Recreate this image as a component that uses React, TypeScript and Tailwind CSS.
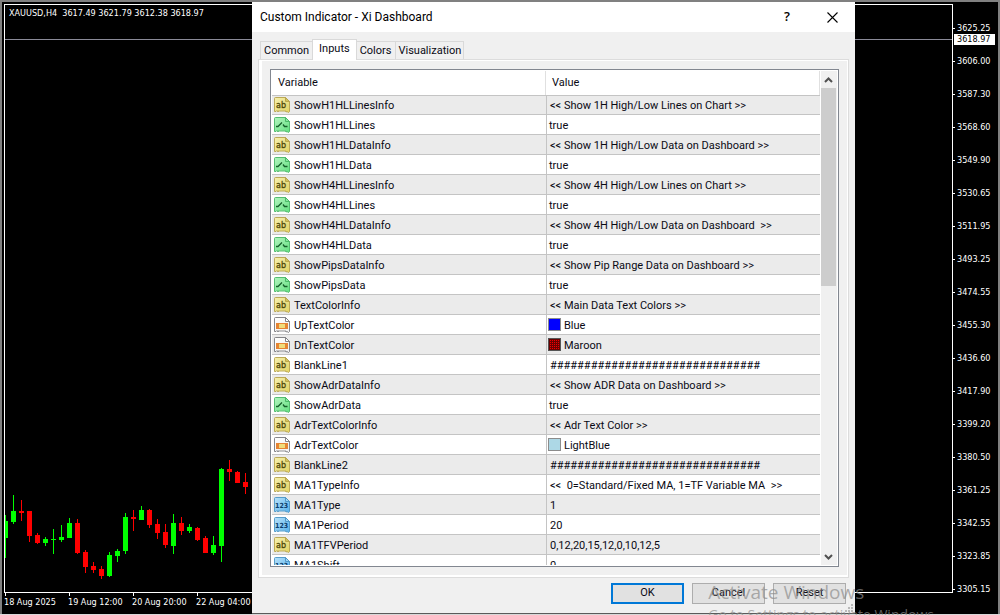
import { useState } from "react";
import { clsx } from "clsx";

type Kind = "string" | "bool" | "color" | "int";

interface Param {
  name: string;
  kind: Kind;
  value: string;
  swatch?: "blue" | "maroon" | "lightblue";
}

interface Candle {
  up: boolean;
  // high, body top, body bottom, low
  y: [number, number, number, number];
}

const TABS = ["Common", "Inputs", "Colors", "Visualization"];

const PARAMS: Param[] = [
  { name: "ShowH1HLLinesInfo", kind: "string", value: "<< Show 1H High/Low Lines on Chart >>" },
  { name: "ShowH1HLLines", kind: "bool", value: "true" },
  { name: "ShowH1HLDataInfo", kind: "string", value: "<< Show 1H High/Low Data on Dashboard >>" },
  { name: "ShowH1HLData", kind: "bool", value: "true" },
  { name: "ShowH4HLLinesInfo", kind: "string", value: "<< Show 4H High/Low Lines on Chart >>" },
  { name: "ShowH4HLLines", kind: "bool", value: "true" },
  { name: "ShowH4HLDataInfo", kind: "string", value: "<< Show 4H High/Low Data on Dashboard  >>" },
  { name: "ShowH4HLData", kind: "bool", value: "true" },
  { name: "ShowPipsDataInfo", kind: "string", value: "<< Show Pip Range Data on Dashboard >>" },
  { name: "ShowPipsData", kind: "bool", value: "true" },
  { name: "TextColorInfo", kind: "string", value: "<< Main Data Text Colors >>" },
  { name: "UpTextColor", kind: "color", value: "Blue", swatch: "blue" },
  { name: "DnTextColor", kind: "color", value: "Maroon", swatch: "maroon" },
  { name: "BlankLine1", kind: "string", value: "###############################" },
  { name: "ShowAdrDataInfo", kind: "string", value: "<< Show ADR Data on Dashboard >>" },
  { name: "ShowAdrData", kind: "bool", value: "true" },
  { name: "AdrTextColorInfo", kind: "string", value: "<< Adr Text Color >>" },
  { name: "AdrTextColor", kind: "color", value: "LightBlue", swatch: "lightblue" },
  { name: "BlankLine2", kind: "string", value: "###############################" },
  { name: "MA1TypeInfo", kind: "string", value: "<<  0=Standard/Fixed MA, 1=TF Variable MA  >>" },
  { name: "MA1Type", kind: "int", value: "1" },
  { name: "MA1Period", kind: "int", value: "20" },
  { name: "MA1TFVPeriod", kind: "string", value: "0,12,20,15,12,0,10,12,5" },
  { name: "MA1Shift", kind: "int", value: "0" },
];

const PRICES = [
  "3625.25", "3606.00", "3587.30", "3568.60", "3549.90", "3530.65",
  "3511.95", "3493.25", "3474.55", "3455.30", "3436.60", "3417.90",
  "3399.20", "3380.50", "3361.25", "3342.55", "3323.85", "3305.15",
];

const TIMES = ["18 Aug 2025", "19 Aug 12:00", "20 Aug 20:00", "22 Aug 04:00"];

const CANDLES: Candle[] = [
  { up: true, y: [515, 521, 538, 558] },
  { up: true, y: [495, 511, 522, 524] },
  { up: false, y: [500, 511, 513, 521] },
  { up: false, y: [511, 511, 536, 542] },
  { up: false, y: [533, 535, 543, 544] },
  { up: true, y: [537, 539, 543, 546] },
  { up: true, y: [529, 539, 540, 554] },
  { up: true, y: [525, 537, 540, 542] },
  { up: true, y: [518, 523, 538, 538] },
  { up: false, y: [519, 523, 553, 554] },
  { up: false, y: [550, 552, 567, 573] },
  { up: false, y: [562, 566, 570, 573] },
  { up: false, y: [566, 569, 576, 579] },
  { up: true, y: [552, 555, 576, 577] },
  { up: true, y: [549, 551, 556, 562] },
  { up: true, y: [513, 517, 551, 554] },
  { up: false, y: [510, 517, 519, 531] },
  { up: true, y: [506, 510, 520, 520] },
  { up: false, y: [509, 510, 525, 528] },
  { up: false, y: [519, 524, 533, 539] },
  { up: false, y: [524, 532, 545, 548] },
  { up: true, y: [514, 523, 546, 554] },
  { up: false, y: [517, 523, 531, 535] },
  { up: true, y: [524, 527, 531, 533] },
  { up: false, y: [527, 528, 540, 541] },
  { up: false, y: [536, 538, 553, 553] },
  { up: true, y: [536, 545, 553, 555] },
  { up: true, y: [468, 469, 546, 562] },
  { up: false, y: [460, 469, 472, 481] },
  { up: false, y: [471, 472, 483, 483] },
  { up: false, y: [473, 482, 487, 494] },
];

// ---------------------------------------------------------------------------
// Icons
// ---------------------------------------------------------------------------

const ICON_COLORS: Record<Kind, { from: string; to: string; edge: string; fold: string }> = {
  string: { from: "#f6f0b0", to: "#e2d462", edge: "#b5a24a", fold: "#d3c35c" },
  bool: { from: "#b4f5c0", to: "#62e080", edge: "#46b463", fold: "#8ae8a0" },
  color: { from: "#ffffff", to: "#f0f0f0", edge: "#77777c", fold: "#ffffff" },
  int: { from: "#b8e2fa", to: "#56b0ea", edge: "#4a94c4", fold: "#9fd6f6" },
};

function ParamIcon({ kind }: { kind: Kind }) {
  const c = ICON_COLORS[kind];
  const id = `fill-${kind}`;
  return (
    <svg className="h-4 w-4 shrink-0" viewBox="0 0 16 16" aria-hidden="true">
      <defs>
        <linearGradient id={id} x1="0" y1="0" x2="1" y2="1">
          <stop offset="0" stopColor={c.from} />
          <stop offset="1" stopColor={c.to} />
        </linearGradient>
      </defs>
      <path
        d="M.5 1.5Q.5.5 1.5.5H11.5L15.5 4.5V14.5L14.5 15.5L13 14.5L12 15L11 13.5L10 14.5L9 13.5L8 14.5L7 13.5L6 14.5L5 13.5L4 15L3 13.5L2 14.5L.5 14.500Z"
        fill={`url(#${id})`}
        stroke={c.edge}
        strokeWidth=".9"
      />
      <path d="M11.5.5V4.5H15.5Z" fill={c.fold} stroke={c.edge} strokeWidth=".9" />
      {kind === "string" && (
        <text x="2" y="11" className="font-['DejaVu_Sans'] text-[8px]" fill="#4e4708" stroke="#4e4708" strokeWidth=".3">
          ab
        </text>
      )}
      {kind === "int" && (
        <text x="1" y="11" className="font-['DejaVu_Sans_Condensed'] text-[7px] font-bold" fill="#0c3c6a">
          123
        </text>
      )}
      {kind === "bool" && (
        <path d="M2 9.500H4L8 5.500M9 7.500L10.500 9.500H13.500" fill="none" stroke="#17602b" strokeWidth="1.300" />
      )}
      {kind === "color" && (
        <>
          <rect x="2" y="6" width="12" height="6" fill="#e58433" />
          <rect x="5" y="7" width="6" height="4" fill="#f0dc7a" />
        </>
      )}
    </svg>
  );
}

function Swatch({ color }: { color: NonNullable<Param["swatch"]> }) {
  return (
    <svg className="size-[13px] shrink-0" viewBox="0 0 13 13" aria-hidden="true">
      <defs>
        <pattern id="maroon-dither" width="2" height="2" patternUnits="userSpaceOnUse">
          <rect width="2" height="2" fill="#6a0000" />
          <rect width="1" height="1" fill="#f00000" />
        </pattern>
      </defs>
      <rect
        x=".5"
        y=".5"
        width="12"
        height="12"
        stroke={color === "maroon" ? "#555" : "#8c8c8c"}
        fill={color === "blue" ? "#0000ff" : color === "maroon" ? "url(#maroon-dither)" : "#add8e6"}
      />
    </svg>
  );
}

// ---------------------------------------------------------------------------
// Chart
// ---------------------------------------------------------------------------

function Chart() {
  return (
    <div className="flex min-h-0 flex-1 border-t-2 border-r-2 border-l-2 border-[#808080] bg-black pt-0.5 pl-0.5 font-['DejaVu_Sans_Condensed',sans-serif] text-[9px] text-white">
      <div className="flex min-w-0 flex-1 flex-col">
        <div className="flex min-h-0 flex-1 flex-col border border-white">
          <div className="h-[35px] shrink-0 border-b border-[#8a8a98] pl-1 leading-[16px] whitespace-pre">
            {"XAUUSD,H4  3617.49 3621.79 3612.38 3618.97"}
          </div>
          <svg className="mt-auto h-[140px] w-[250px] shrink-0" viewBox="5 452 250 140" shapeRendering="crispEdges">
            {CANDLES.map(({ up, y }, i) => {
              const x = 5 + i * 8;
              return (
                <g key={x} fill={up ? "#00ff00" : "#ff0000"}>
                  <rect x={x} y={y[0]} width="1" height={y[3] - y[0]} />
                  <rect x={x - 2} y={y[1]} width="5" height={y[2] - y[1]} />
                </g>
              );
            })}
          </svg>
        </div>
        <div className="flex h-[21px] shrink-0">
          {TIMES.map((time) => (
            <div key={time} className="w-16 whitespace-nowrap">
              <div className="ml-px h-[3px] w-px bg-white" />
              <div className="leading-[12px]">{time}</div>
            </div>
          ))}
        </div>
      </div>

      <div className="relative w-[45px] shrink-0 pt-2">
        {PRICES.map((price) => (
          <div key={price} className="flex h-[33px] items-center gap-0.5">
            <span className="h-px w-0.5 bg-white" />
            {price}
          </div>
        ))}
        <div className="absolute top-[30px] left-px w-[41px] bg-white pl-[3px] leading-[11px] text-black">3618.97</div>
      </div>
    </div>
  );
}

// ---------------------------------------------------------------------------
// Dialog
// ---------------------------------------------------------------------------

function Scrollbar() {
  return (
    <div className="ml-px flex w-4 shrink-0 flex-col bg-[#f0f0f0]">
      <button type="button" aria-label="Scroll up" className="flex h-[17px] w-[15px] items-center justify-center">
        <svg className="h-[6px] w-[9px]" viewBox="0 0 9 6" fill="none" stroke="#505050" strokeWidth="2">
          <path d="M1 5L4.500 1.500L8 5" />
        </svg>
      </button>
      <div className="min-h-0 flex-1">
        <div className="h-[43%] w-[15px] bg-[#cdcdcd]" />
      </div>
      <button type="button" aria-label="Scroll down" className="flex h-[17px] w-[15px] items-center justify-center">
        <svg className="h-[6px] w-[9px]" viewBox="0 0 9 6" fill="none" stroke="#505050" strokeWidth="2">
          <path d="M1 1L4.500 4.500L8 1" />
        </svg>
      </button>
    </div>
  );
}

function ParamTable() {
  return (
    <div className="flex min-h-0 flex-1 overflow-hidden border border-[#828790] bg-white p-px">
      <div className="min-w-0 flex-1 overflow-hidden">
        <table className="w-full table-fixed border-separate border-spacing-0 text-left leading-4">
          <thead>
            <tr>
              <th className="h-6 border-r border-[#e0e0e0] p-0 pl-1.5 font-normal">Variable</th>
              <th className="h-6 border-r border-[#e0e0e0] p-0 pl-1.5 font-normal">Value</th>
            </tr>
          </thead>
          <tbody className="[&>tr:first-child>td]:border-t">
            {PARAMS.map((param, i) => (
              <tr key={param.name} className={i % 2 === 0 ? "bg-[#ebebeb]" : "bg-white"}>
                <td className="h-5 border-b border-[#c4c4c4] p-0 pl-0.5">
                  <div className="flex items-center gap-1">
                    <ParamIcon kind={param.kind} />
                    <span className="pt-0.5">{param.name}</span>
                  </div>
                </td>
                <td
                  className={clsx(
                    "h-5 border-b border-l border-[#c4c4c4] p-0 whitespace-pre",
                    param.swatch ? "pl-px" : param.kind === "bool" ? "pl-0.5" : "pl-[3px]"
                  )}
                >
                  <div className="flex items-center gap-[3px]">
                    {param.swatch && <Swatch color={param.swatch} />}
                    <span className="pt-0.5">{param.value}</span>
                  </div>
                </td>
              </tr>
            ))}
          </tbody>
        </table>
      </div>
      <Scrollbar />
    </div>
  );
}

function Dialog() {
  const [tab, setTab] = useState("Inputs");

  return (
    <div
      role="dialog"
      aria-label="Custom Indicator - Xi Dashboard"
      className="absolute top-[2px] right-[145px] bottom-px left-[252px] flex flex-col border-b border-[#5a5a5a] bg-[#f0f0f0] text-[11px] text-[#0a0a14]"
    >
      <div className="flex h-[30px] shrink-0 items-center bg-white pr-[17px] pl-2">
        <h1 className="flex-1 text-[12px] text-black">Custom Indicator - Xi Dashboard</h1>
        <button type="button" aria-label="Help" className="w-6 font-['Open_Sans',sans-serif] text-[13px] font-semibold text-black">
          ?
        </button>
        <button type="button" aria-label="Close" className="ml-7 text-black">
          <svg className="size-[11px]" viewBox="0 0 11 11" fill="none" stroke="currentColor" strokeWidth="1.1">
            <path d="M.5.5L10.500 10.500M10.500.5L.5 10.500" />
          </svg>
        </button>
      </div>

      <div className="flex min-h-0 flex-1 flex-col px-1.5 pt-[7px]">
        <div role="tablist" className="relative -mb-px flex h-[21px] shrink-0 items-end pl-0.5">
          {TABS.map((name) => (
            <button
              key={name}
              type="button"
              role="tab"
              aria-selected={tab === name}
              onClick={() => setTab(name)}
              className={clsx(
                "border-[#d9d9d9]",
                tab === name
                  ? "-mx-px h-[21px] border-x border-t bg-white px-1.5 pb-0.5"
                  : "mb-px h-[18px] border-t border-r px-1 pt-px first:border-l first:px-[3px] last:px-0.5"
              )}
            >
              {name}
            </button>
          ))}
        </div>

        <div role="tabpanel" className="flex min-h-0 flex-1 flex-col border border-[#dcdcdc]">
          <div className="flex min-h-0 flex-1 flex-col border-t border-r border-b-2 border-l-3 border-white p-2">
            <ParamTable />
          </div>
        </div>
      </div>

      <div className="flex shrink-0 justify-end gap-2 pt-[5px] pr-[9px] pb-[9px]">
        <button type="button" className="h-[21px] w-[73px] border-2 border-[#0078d7] bg-[#e1e1e1]">OK</button>
        <button type="button" className="h-[21px] w-[73px] border border-[#adadad] bg-[#e1e1e1]">Cancel</button>
        <button type="button" className="h-[21px] w-[73px] border border-[#adadad] bg-[#e1e1e1]">Reset</button>
      </div>

      <svg className="absolute right-[2px] bottom-px size-2" viewBox="0 0 8 8" fill="#b8b8b8" aria-hidden="true">
        <path d="M6 0h2v2H6zM3 3h2v2H3zM6 3h2v2H6zM0 6h2v2H0zM3 6h2v2H3zM6 6h2v2H6z" />
      </svg>
    </div>
  );
}

export default function App() {
  return (
    <div className="relative flex h-screen flex-col overflow-hidden bg-[#d8d8d8] pb-px font-['Roboto',sans-serif]">
      <Chart />
      <Dialog />
      <div className="pointer-events-none absolute right-[66px] bottom-[-9px] font-['Open_Sans',sans-serif] whitespace-nowrap text-[#8c8c8c]/70">
        <div className="text-[19px] leading-[28px]">Activate Windows</div>
        <div className="text-[14px] leading-[18px]">Go to Settings to activate Windows</div>
      </div>
    </div>
  );
}
